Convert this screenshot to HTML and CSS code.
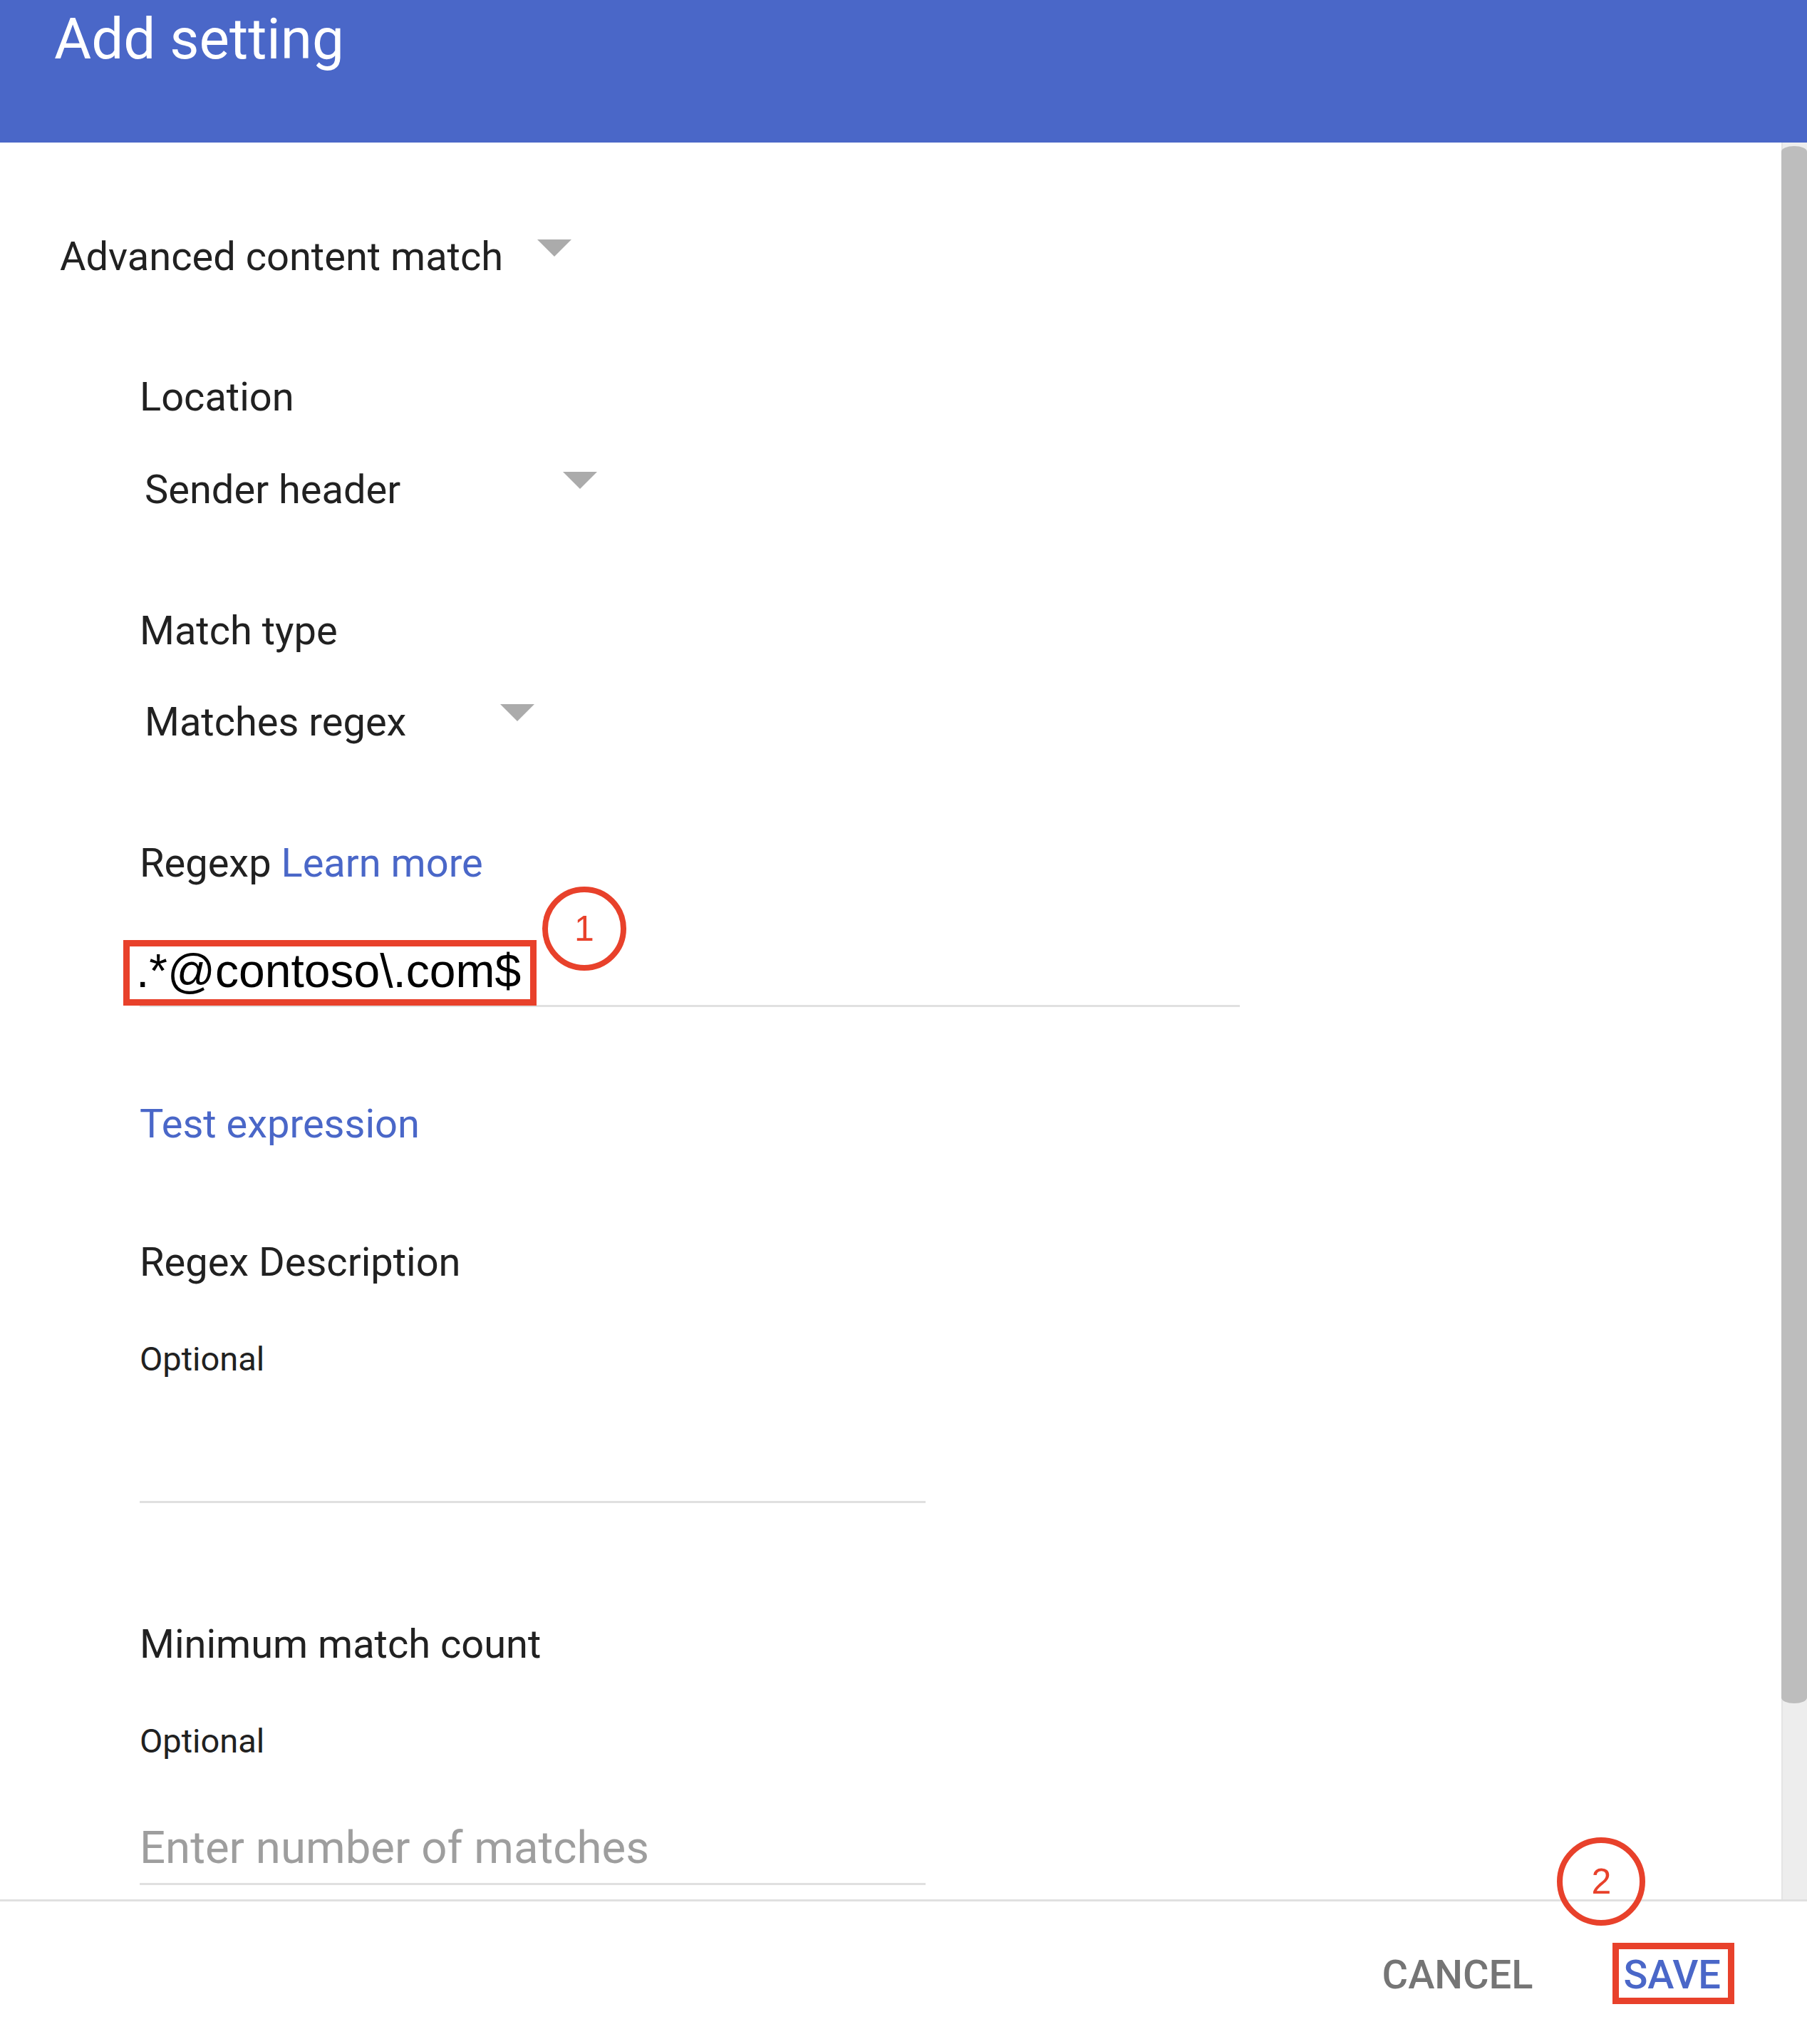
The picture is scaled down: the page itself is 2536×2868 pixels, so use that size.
FILE: index.html
```html
<!DOCTYPE html>
<html>
<head>
<meta charset="utf-8">
<link rel="stylesheet" href="styles.css">
</head>
<body>
<div class="dialog">
  <header class="header">
    <h1 class="title">Add setting</h1>
  </header>
  <div class="content">
    <div class="form">
      <div class="select select-main">
        <span class="select-text">Advanced content match</span>
        <span class="caret caret-main"></span>
      </div>
      <div class="section">
        <div class="label label-location">Location</div>
        <div class="select select-location">
          <span class="select-text">Sender header</span>
          <span class="caret caret-sub"></span>
        </div>
        <div class="label label-match">Match type</div>
        <div class="select select-matchtype">
          <span class="select-text">Matches regex</span>
          <span class="caret caret-sub"></span>
        </div>
        <div class="label label-regexp">Regexp <a class="link">Learn more</a></div>
        <div class="regex-input">
          <span class="regex-value">.*@contoso\.com$</span>
          <span class="mark-box mark-box-regex"></span>
          <span class="mark-circle mark-circle-1">1</span>
        </div>
        <div class="test-link">Test expression</div>
        <div class="label label-desc">Regex Description</div>
        <div class="hint hint-desc">Optional</div>
        <div class="text-field text-field-desc"></div>
        <div class="label label-min">Minimum match count</div>
        <div class="hint hint-min">Optional</div>
        <div class="text-field text-field-min">
          <span class="placeholder">Enter number of matches</span>
        </div>
      </div>
    </div>
    <div class="scrollbar">
      <div class="scroll-thumb"></div>
    </div>
  </div>
  <footer class="footer">
    <span class="btn btn-cancel">CANCEL</span>
    <span class="btn btn-save">SAVE
      <span class="mark-box mark-box-save"></span>
      <span class="mark-circle mark-circle-2">2</span>
    </span>
  </footer>
</div>
</body>
</html>
```

FILE: styles.css
```css
html, body {
  margin: 0;
  padding: 0;
  background: #ffffff;
}
body {
  width: 2536px;
  height: 2868px;
  overflow: hidden;
  font-family: Roboto, "Liberation Sans", Arial, sans-serif;
  color: #212121;
}
.dialog {
  display: flex;
  flex-direction: column;
  width: 2536px;
  height: 2868px;
}
.header {
  height: 200px;
  flex: 0 0 200px;
  background: #4a67c8;
  box-sizing: border-box;
  padding: 8px 0 0 76px;
}
.title {
  margin: 0;
  font-size: 80px;
  line-height: 94px;
  font-weight: 400;
  color: #ffffff;
}
.content {
  flex: 1 1 auto;
  display: flex;
  overflow: hidden;
  min-height: 0;
}
.form {
  flex: 1 1 auto;
  padding: 127px 0 0 84px;
  box-sizing: border-box;
}
.select {
  display: flex;
  justify-content: space-between;
  align-items: flex-start;
  font-size: 56px;
  line-height: 66px;
  color: #212121;
}
.select-main {
  width: 718px;
}
.caret {
  width: 0;
  height: 0;
  border-left: 24px solid transparent;
  border-right: 24px solid transparent;
  border-top: 24px solid #ababab;
}
.caret-main {
  margin-top: 9px;
}
.caret-sub {
  margin-top: 8px;
}
.section {
  padding-left: 112px;
}
.label {
  font-size: 56px;
  line-height: 66px;
}
.label-location { margin-top: 131px; }
.select-location {
  margin-top: 64px;
  margin-left: 7px;
  width: 635px;
}
.label-match { margin-top: 132px; }
.select-matchtype {
  margin-top: 62px;
  margin-left: 7px;
  width: 547px;
}
.label-regexp { margin-top: 132px; }
.link {
  color: #4a67c8;
  text-decoration: none;
}
.regex-input {
  position: relative;
  margin-top: 78px;
  margin-left: 0;
  width: 1544px;
  height: 88px;
  border-bottom: 3px solid #e0e0e0;
}
.regex-value {
  display: block;
  font-family: "Liberation Sans", Arial, sans-serif;
  font-size: 66px;
  line-height: 80px;
  color: #000000;
  text-indent: -5px;
}
.mark-box {
  position: absolute;
  box-sizing: border-box;
  border: 9px solid #e8412b;
}
.mark-box-regex {
  left: -23px;
  top: -3px;
  width: 580px;
  height: 92px;
}
.mark-circle {
  position: absolute;
  box-sizing: border-box;
  border: 8px solid #e8412b;
  border-radius: 50%;
  display: flex;
  align-items: center;
  justify-content: center;
  font-family: "Liberation Sans", Arial, sans-serif;
  font-size: 50px;
  font-weight: 400;
  color: #e8412b;
}
.mark-circle-1 {
  left: 565px;
  top: -78px;
  width: 118px;
  height: 118px;
}
.test-link {
  margin-top: 131px;
  font-size: 56px;
  line-height: 66px;
  color: #4a67c8;
}
.label-desc { margin-top: 128px; }
.hint {
  font-size: 47px;
  line-height: 56px;
  color: #212121;
}
.hint-desc { margin-top: 75px; }
.text-field {
  width: 1103px;
  border-bottom: 3px solid #e0e0e0;
}
.text-field-desc {
  height: 171px;
}
.label-min { margin-top: 165px; }
.hint-min { margin-top: 75px; }
.text-field-min {
  margin-top: 85px;
  padding-bottom: 12px;
}
.placeholder {
  display: block;
  font-size: 63.5px;
  line-height: 74px;
  color: #9e9e9e;
}
.scrollbar {
  flex: 0 0 36px;
  width: 36px;
  background: #ededed;
  box-shadow: inset 2px 0 0 #e4e4e4;
  padding-top: 5px;
  box-sizing: border-box;
}
.scroll-thumb {
  width: 36px;
  height: 2185px;
  background: #bdbdbd;
  border-radius: 18px / 8px;
}
.footer {
  flex: 0 0 203px;
  box-sizing: border-box;
  border-top: 3px solid #e0e0e0;
  display: flex;
  justify-content: flex-end;
  align-items: flex-start;
  padding: 70px 121px 0 0;
  gap: 127px;
}
.btn {
  position: relative;
  font-size: 56px;
  line-height: 66px;
  font-weight: 500;
}
.btn-cancel {
  color: #757575;
}
.btn-save {
  color: #4a67c8;
}
.mark-box-save {
  left: -15px;
  top: -12px;
  width: 171px;
  height: 86px;
}
.mark-circle-2 {
  left: -93px;
  top: -160px;
  width: 124px;
  height: 124px;
}
```
